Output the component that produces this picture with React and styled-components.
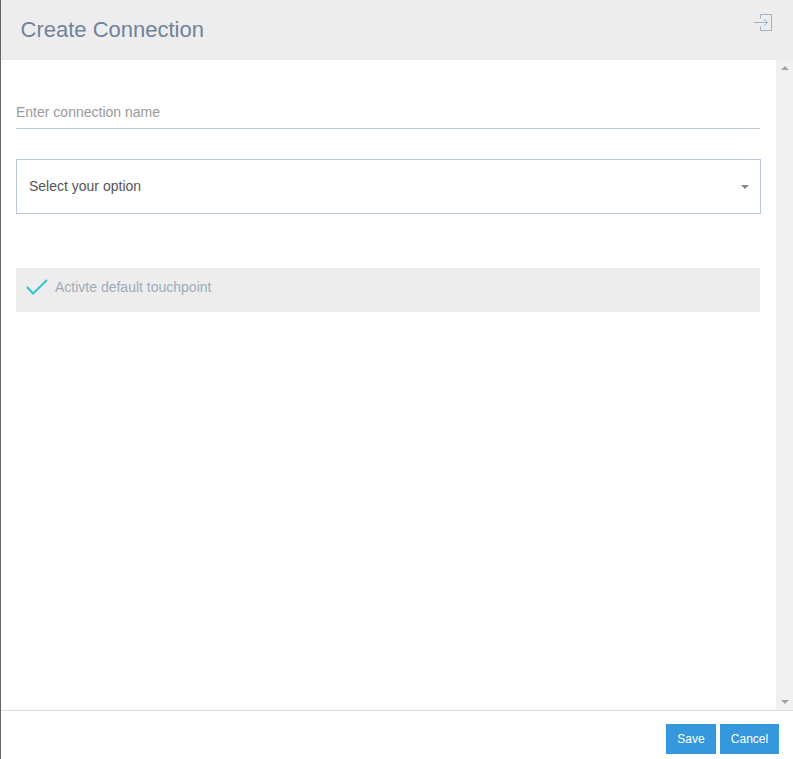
import React from "react";
import styled, { createGlobalStyle } from "styled-components";

const Global = createGlobalStyle`
  html, body { margin: 0; padding: 0; background: #fff; overflow: hidden; }
  * { box-sizing: border-box; }
`;

const Panel = styled.div`
  width: 793px;
  height: 759px;
  display: flex;
  flex-direction: column;
  border-left: 1px solid #666;
  font-family: "Liberation Sans", Arial, sans-serif;
  background: #fff;
`;

const Header = styled.header`
  height: 60px;
  flex: none;
  background: #ededed;
  display: flex;
  align-items: flex-start;
  justify-content: space-between;
  padding: 16px 20px 0 19.5px;
`;

const Title = styled.h1`
  margin: 0;
  font-size: 22px;
  line-height: 27px;
  font-weight: 400;
  color: #70839a;
`;

const ExitButton = styled.button`
  border: 0;
  background: none;
  padding: 0;
  margin-top: -3px;
  width: 19px;
  height: 19px;
  display: flex;
  cursor: pointer;
`;

const Middle = styled.div`
  flex: 1;
  min-height: 0;
  display: flex;
`;

const Content = styled.main`
  flex: 1;
  padding: 40px 16px 0 15px;
  display: flex;
  flex-direction: column;
`;

const NameInput = styled.input`
  width: 100%;
  height: 29px;
  border: 0;
  border-bottom: 1px solid #b9c7d6;
  padding: 0 0 4px;
  outline: none;
  background: transparent;
  font: 14px "Liberation Sans", Arial, sans-serif;
  color: #555;
  &::placeholder { color: #9a9a9a; opacity: 1; }
`;

const SelectBox = styled.div`
  margin: 30px -1px 0 0;
  height: 55px;
  border: 1px solid #b9c7d6;
  display: flex;
  align-items: center;
  justify-content: space-between;
  padding: 0 11px 2px 12px;
  font-size: 14px;
  color: #555;
`;

const Caret = styled.span`
  width: 0;
  height: 0;
  margin-top: 2px;
  border-left: 4px solid transparent;
  border-right: 4px solid transparent;
  border-top: 4px solid #888;
`;

const CheckRow = styled.label`
  margin-top: 54px;
  height: 44px;
  background: #ededed;
  display: flex;
  align-items: center;
  gap: 7px;
  padding: 0 0 6px 10px;
  font-size: 14px;
  color: #9fabb9;
`;

const Track = styled.div`
  width: 17px;
  flex: none;
  background: #f1f1f1;
  display: flex;
  flex-direction: column;
  align-items: center;
  justify-content: space-between;
  padding: 6px 0;
`;

const ArrowUp = styled.span`
  width: 0;
  height: 0;
  border-left: 4px solid transparent;
  border-right: 4px solid transparent;
  border-bottom: 4px solid #a3a3a3;
`;

const ArrowDown = styled.span`
  width: 0;
  height: 0;
  border-left: 4px solid transparent;
  border-right: 4px solid transparent;
  border-top: 4px solid #a3a3a3;
`;

const Footer = styled.footer`
  height: 49px;
  flex: none;
  border-top: 1px solid #ddd;
  display: flex;
  justify-content: flex-end;
  align-items: flex-start;
  gap: 4px;
  padding: 13px 14px 0 0;
`;

const Action = styled.button`
  height: 30px;
  width: ${(p) => p.$w}px;
  border: 0;
  padding: 0;
  background: #3598dc;
  color: #fff;
  font: 12px "Liberation Sans", Arial, sans-serif;
  cursor: pointer;
`;

export default function App() {
  return (
    <Panel>
      <Global />
      <Header>
        <Title>Create Connection</Title>
        <ExitButton aria-label="Close">
          <svg width="19" height="19" viewBox="0 0 19 19" fill="none" stroke="#9db2c8" strokeWidth="1">
            <path d="M6.5 5.5V1.5H17.5V17.5H6.5V13.5" />
            <path d="M0 9.5H13.5M10 6L13.5 9.5L10 13" />
          </svg>
        </ExitButton>
      </Header>
      <Middle>
        <Content>
          <NameInput placeholder="Enter connection name" />
          <SelectBox>
            <span>Select your option</span>
            <Caret />
          </SelectBox>
          <CheckRow>
            <svg width="22" height="16" viewBox="0 0 22 16" fill="none" stroke="#35c3d2" strokeWidth="2">
              <path d="M1 8L7 14.5L21 1" />
            </svg>
            Activte default touchpoint
          </CheckRow>
        </Content>
        <Track>
          <ArrowUp />
          <ArrowDown />
        </Track>
      </Middle>
      <Footer>
        <Action $w={50}>Save</Action>
        <Action $w={59}>Cancel</Action>
      </Footer>
    </Panel>
  );
}
